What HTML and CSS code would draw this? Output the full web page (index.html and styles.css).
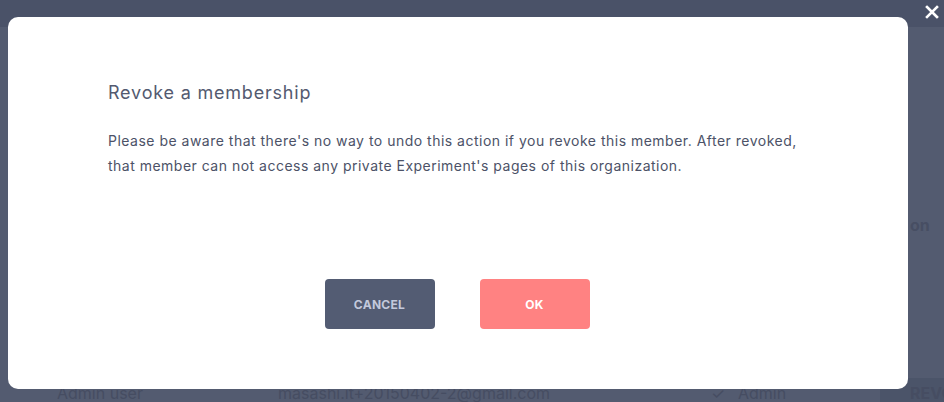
FILE: index.html
```html
<!DOCTYPE html>
<html>
<head>
<meta charset="utf-8">
<link rel="stylesheet" href="styles.css">
</head>
<body>
<div class="page">
  <div class="topbar"></div>
  <div class="content">
    <div class="side-text">on</div>
  </div>
  <div class="row">
    <span class="cell name">Admin user</span>
    <span class="cell email">masashi.it+20150402-2@gmail.com</span>
    <span class="cell check">✓</span>
    <span class="cell role">Admin</span>
    <span class="cell revoke">REVOKE</span>
  </div>
</div>

<svg class="close" width="14" height="14" viewBox="0 0 14 14"><path d="M2 2 L12 12 M12 2 L2 12" stroke="#ffffff" stroke-width="2.6" stroke-linecap="square"/></svg>

<div class="modal">
  <h2 class="title">Revoke a membership</h2>
  <p class="body">Please be aware that there's no way to undo this action if you revoke this member. After revoked, that member can not access any private Experiment's pages of this organization.</p>
  <div class="actions">
    <button class="btn btn-cancel">CANCEL</button>
    <button class="btn btn-ok">OK</button>
  </div>
</div>
</body>
</html>
```

FILE: styles.css
```css
html, body {
  margin: 0;
  padding: 0;
  width: 944px;
  height: 402px;
  overflow: hidden;
  font-family: "Inter", "Open Sans", sans-serif;
}
.page {
  display: flex;
  flex-direction: column;
  height: 402px;
  background: #535b70;
}
.topbar {
  height: 27px;
  background: #4a5268;
  flex: none;
}
.content {
  flex: 1;
  display: flex;
  justify-content: flex-end;
  padding-top: 188px;
}
.side-text {
  color: #474e63;
  font-size: 16px;
  font-weight: 700;
  width: 34px;
}
.row {
  height: 24px;
  display: flex;
  align-items: flex-end;
  color: #464d62;
  font-size: 16px;
  line-height: 18px;
  flex: none;
}
.cell { white-space: nowrap; flex: none; overflow: hidden; }
.name { margin-left: 57px; width: 221px; }
.email { width: 433px; }
.check { width: 27px; }
.role { width: 142px; }
.revoke {
  background: #4b5469;
  height: 24px;
  box-sizing: border-box;
  padding-top: 6px;
  flex: 1 1 0;
  min-width: 0;
  padding-left: 30px;
  font-weight: 700;
}
.close {
  position: absolute;
  top: 5px;
  left: 925px;
}
.modal {
  position: absolute;
  left: 8px;
  top: 17px;
  width: 900px;
  height: 372px;
  background: #ffffff;
  border-radius: 10px;
  box-sizing: border-box;
  padding: 64px 102px 0 100px;
  display: flex;
  flex-direction: column;
}
.title {
  margin: 0;
  font-size: 18px;
  font-weight: 400;
  color: #535a70;
  line-height: 24px;
  letter-spacing: 0.8px;
}
.body {
  margin: 23px 0 0 0;
  font-size: 14px;
  line-height: 25px;
  color: #4c5267;
  font-weight: 400;
  width: 700px;
  letter-spacing: 0.49px;
}
.actions {
  display: flex;
  justify-content: center;
  gap: 45px;
  margin-top: 101px;
}
.btn {
  width: 110px;
  height: 50px;
  border: none;
  border-radius: 4px;
  font-family: "Inter", sans-serif;
  font-size: 12px;
  font-weight: 700;
  letter-spacing: 0.3px;
}
.btn-cancel {
  background: #535c73;
  color: #c3c9dc;
}
.btn-ok {
  background: #ff8282;
  color: #ffffff;
}
```
